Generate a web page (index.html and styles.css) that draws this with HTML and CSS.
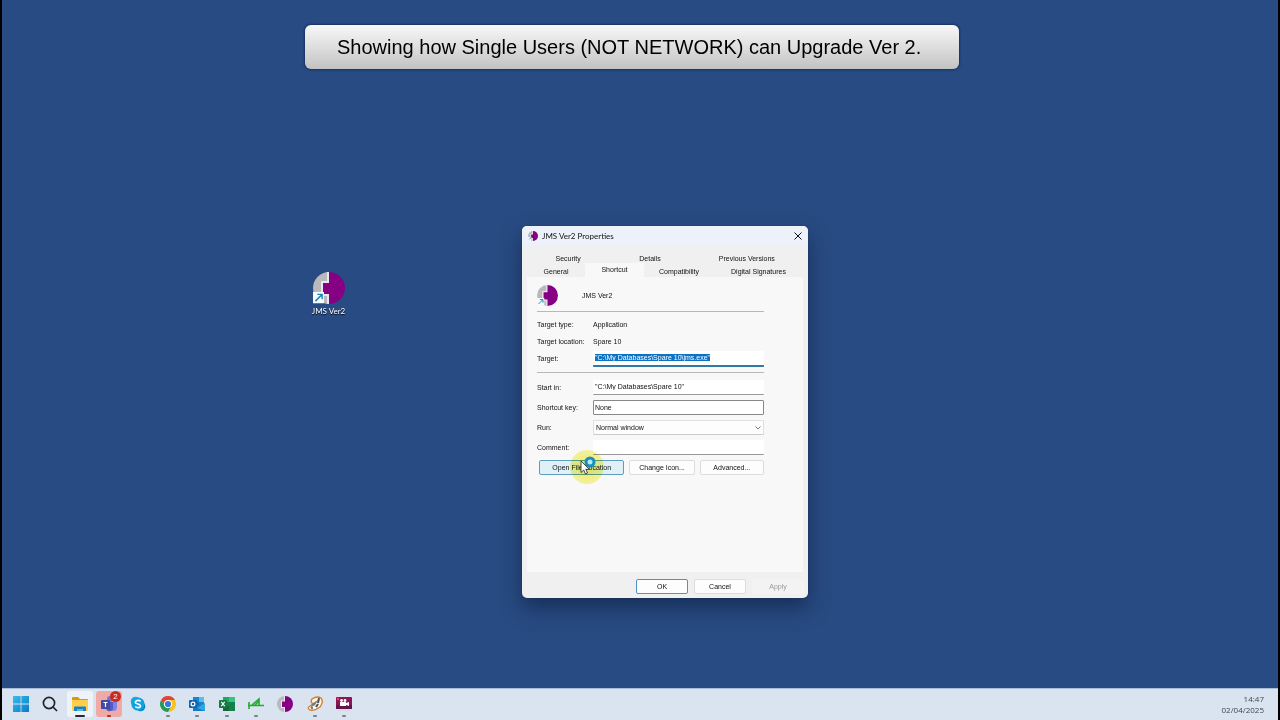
FILE: index.html
```html
<!DOCTYPE html>
<html lang="en">
<head>
<meta charset="utf-8">
<title>Desktop</title>
<link rel="stylesheet" href="styles.css">
</head>
<body>
<svg class="defs" width="0" height="0" aria-hidden="true">
  <clipPath id="disc"><circle cx="16" cy="16" r="16"/></clipPath>
  <symbol id="jms" viewBox="0 0 32 32">
    <g clip-path="url(#disc)">
      <path fill="#b9b9bd" d="M0 0H16V32H0Z"/>
      <path fill="#ece6f0" d="M8 9H14V0H17V32H14V24H8Z"/>
      <path fill="#850083" d="M16 0H32V32H16V22H10V11H16Z"/>
    </g>
  </symbol>
  <symbol id="link" viewBox="0 0 12 12">
    <path fill="#f8fbfd" d="M0 0H12V12H0Z"/>
    <path d="M2.500 9.500L9 3M4.500 2.500H9.500V7.500" fill="none" stroke="#1689b8" stroke-width="1.500"/>
  </symbol>
</svg>
<main class="desktop">
  <h1 class="banner">Showing how Single Users (NOT NETWORK) can Upgrade Ver 2.</h1>

  <a class="shortcut" href="#props">
    <span class="app-icon"><svg class="logo"><use href="#jms"/></svg><svg class="badge"><use href="#link"/></svg></span>
    <span>JMS Ver2</span>
  </a>

  <section class="window" id="props" role="dialog" aria-labelledby="caption">
    <header class="titlebar">
      <span class="app-icon tiny"><svg class="logo"><use href="#jms"/></svg><svg class="badge"><use href="#link"/></svg></span>
      <h2 id="caption">JMS Ver2 Properties</h2>
      <button class="close" aria-label="Close"><svg viewBox="0 0 8 8"><path d="M.5.5l7 7M7.500.5l-7 7" stroke="#111" fill="none"/></svg></button>
    </header>
    <nav class="tabs" role="tablist">
      <div class="tab-row back">
        <button role="tab">Security</button><button role="tab">Details</button><button role="tab">Previous Versions</button>
      </div>
      <div class="tab-row front">
        <button role="tab">General</button><button role="tab" class="active" aria-selected="true">Shortcut</button><button role="tab">Compatibility</button><button role="tab">Digital Signatures</button>
      </div>
    </nav>
    <form class="panel">
      <div class="heading">
        <span class="app-icon small"><svg class="logo"><use href="#jms"/></svg><svg class="badge"><use href="#link"/></svg></span>
        <span>JMS Ver2</span>
      </div>
      <div class="group info">
        <div class="row"><span>Target type:</span><span>Application</span></div>
        <div class="row"><span>Target location:</span><span>Spare 10</span></div>
        <div class="row"><label for="target">Target:</label><input id="target" class="focused" type="text" value="&quot;C:\My Databases\Spare 10\jms.exe&quot;" spellcheck="false"></div>
      </div>
      <div class="group fields">
        <div class="row"><label for="start">Start in:</label><input id="start" type="text" value="&quot;C:\My Databases\Spare 10&quot;" spellcheck="false"></div>
        <div class="row"><label for="key">Shortcut key:</label><input id="key" class="boxed" type="text" value="None"></div>
        <div class="row"><label for="run">Run:</label><select id="run"><option>Normal window</option><option>Minimized</option><option>Maximized</option></select></div>
        <div class="row"><label for="comment">Comment:</label><input id="comment" type="text"></div>
        <div class="actions">
          <button type="button" class="hot">Open File Location</button>
          <button type="button">Change Icon...</button>
          <button type="button">Advanced...</button>
        </div>
      </div>
    </form>
    <footer class="buttons">
      <button class="default">OK</button>
      <button>Cancel</button>
      <button disabled>Apply</button>
    </footer>
    <span class="halo"></span>
    <svg class="pointer" viewBox="0 0 18 20">
      <circle cx="10" cy="6" r="4" fill="#b9e6f0" stroke="#168fbb" stroke-width="3"/>
      <path d="M1 5V16.500L3.700 14L5.500 18L7.500 17L5.800 13.300H9.300Z" fill="#fff" stroke="#222" stroke-width=".8"/>
    </svg>
  </section>
</main>

<footer class="taskbar">
  <nav class="apps">
    <button aria-label="Start"><svg viewBox="0 0 16 16"><defs><linearGradient id="w" x2="1" y2="1"><stop stop-color="#39bce9"/><stop offset="1" stop-color="#087bc8"/></linearGradient></defs><path fill="url(#w)" d="M0 0H7.600V7.600H0ZM8.400 0H16V7.600H8.400ZM0 8.400H7.600V16H0ZM8.400 8.400H16V16H8.400Z"/></svg></button>
    <button aria-label="Search"><svg viewBox="0 0 16 16"><g fill="none" stroke="#20242a" stroke-width="1.700"><circle cx="7" cy="7" r="5.600"/><path d="M11 11l4 4"/></g></svg></button>
    <button aria-label="File Explorer" class="running current"><svg viewBox="0 0 16 16"><path fill="#dc9615" d="M0 2Q0 1 1 1H6L8 3H15Q16 3 16 4V8H0Z"/><path fill="#ffcf49" d="M0 4H16V14Q16 15 15 15H1Q0 15 0 14Z"/><path fill="#1484c9" d="M2 11.500Q2 10.500 3 10.500H13Q14 10.500 14 11.500V15H2Z"/><path fill="#58b9e2" d="M5 13H11V15H5Z"/></svg></button>
    <button aria-label="Teams, 2 notifications" class="running alert"><svg viewBox="0 0 16 16"><circle cx="9" cy="3" r="3" fill="#7076d8"/><path fill="#7b83eb" d="M5 6H16V11Q16 15 12 15H9Q5 15 5 11Z"/><path fill="#5558bd" d="M5 6H12V13Q10 16 7 15Q5 14 5 11Z"/><rect y="4" width="9" height="9" rx="1" fill="#4149a9"/><path d="M2.500 6.500H6.500M4.500 6.500V11" stroke="#fff" stroke-width="1.200"/></svg><span class="count">2</span></button>
    <button aria-label="Skype"><svg viewBox="0 0 16 16"><circle cx="5.500" cy="5.500" r="4.800" fill="#1aaee8"/><circle cx="10.500" cy="10.500" r="4.800" fill="#087fc7"/><circle cx="8" cy="8" r="6.600" fill="#10a2df"/><path d="M10.700 5.400Q9 3.900 7 4.500Q4.500 5.500 5.800 7.200L9.700 8.700Q11.500 10.500 9.200 11.500Q7 12.100 5.200 10.500" fill="none" stroke="#fff" stroke-width="1.600"/></svg></button>
    <button aria-label="Chrome" class="running"><svg viewBox="0 0 16 16"><path fill="#e34334" d="M1.070 4A8 8 0 0 1 14.930 4H8L4.540 10Z"/><path fill="#f9c31d" d="M14.930 4A8 8 0 0 1 8 16L11.460 10L8 4Z"/><path fill="#249b54" d="M8 16A8 8 0 0 1 1.070 4L4.540 10H11.460Z"/><circle cx="8" cy="8" r="4" fill="#fff"/><circle cx="8" cy="8" r="3.100" fill="#3878d8"/></svg></button>
    <button aria-label="Outlook" class="running"><svg viewBox="0 0 16 16"><path fill="#1686d1" d="M4 1H15V9H4Z"/><path fill="#50c2ee" d="M10 1H15V6H10Z"/><path fill="#1768af" d="M4 6H10V11H4Z"/><path fill="#147ac3" d="M4 9H16V15H4Z"/><path fill="#33a6e2" d="M16 7V15L8 12Z"/><rect y="4" width="8" height="8" rx="1" fill="#1064b0"/><circle cx="4" cy="8" r="1.900" fill="none" stroke="#fff" stroke-width="1.200"/></svg></button>
    <button aria-label="Excel" class="running"><svg viewBox="0 0 16 16"><path fill="#23a566" d="M4 1H10V8H4Z"/><path fill="#35c481" d="M10 1H16V6H10Z"/><path fill="#15804a" d="M4 6H16V15H4Z"/><path fill="#17643e" d="M4 10H10V15H4Z"/><rect y="4" width="8" height="8" rx="1" fill="#107c41"/><path d="M2.300 5.900L5.700 10.200M5.700 5.900L2.300 10.200" stroke="#fff" stroke-width="1.200"/></svg></button>
    <button aria-label="Survey tool" class="running"><svg viewBox="0 0 16 16"><path d="M1 6V13M0 9.500H16M4 9L11 3V9M7 9L11 5" fill="none" stroke="#20ad2b" stroke-width="1.600"/></svg></button>
    <button aria-label="JMS"><svg><use href="#jms"/></svg></button>
    <button aria-label="Paint" class="running"><svg viewBox="0 0 16 16"><path fill="#fff5e6" stroke="#d18132" stroke-width="1.400" d="M5 3Q10-.5 14 2Q17 6 13 11Q8 15 3 14Q-.5 12 3 10L6 8Q3 6 5 3Z"/><path d="M11 4L8 9L3 12L6 7Z" fill="#777b80"/><path d="M12 2L11 7M9 11L11 8" stroke="#504e50" stroke-width="2"/><circle cx="5" cy="12" r="1" fill="#55585b"/></svg></button>
    <button aria-label="Screen recorder" class="running"><svg viewBox="0 0 16 16"><path fill="#d9d9df" d="M3 12H13L15 15H1Z"/><rect y="1" width="16" height="12" rx="1" fill="#8d1457"/><path fill="#5f164c" d="M0 9H16V13H0Z"/><path fill="#fff" d="M4 6H10V10H4ZM10 7L13 6V10L10 9Z"/><circle cx="5.500" cy="4.500" r="1.400" fill="#fff"/><circle cx="9" cy="4.500" r="1.400" fill="#fff"/><circle cx="2" cy="3" r="1.200" fill="#f1483d"/></svg></button>
  </nav>
  <div class="clock"><time>14:47</time><time>02/04/2025</time></div>
</footer>
<script src="script.js"></script>
</body>
</html>
```
FILE: styles.css
```css
* { box-sizing: border-box; }
html { background: #000; }
body {
  display: flex;
  flex-direction: column;
  min-height: 100vh;
  margin: 0 2px;
  font: 7px/10px "Liberation Sans", Arial, sans-serif;
  color: #111;
}
button, input, select { margin: 0; font: inherit; color: inherit; }
.defs { position: absolute; }
.desktop {
  position: relative;
  display: flow-root;
  flex: 1;
  background: #284b83;
}
.banner {
  width: max-content;
  margin: 25px auto 0 303px;
  padding: 10px 38px 10px 32px;
  border-radius: 6px;
  background: linear-gradient(#f8f8f8, #dedede 50%, #c2c2c2);
  box-shadow: 0 0 2px 1px #183361;
  font-size: 20px;
  line-height: 24px;
  font-weight: 400;
  color: #000;
}

.app-icon { position: relative; display: block; width: 32px; height: 32px; }
.app-icon .logo { display: block; width: 100%; height: 100%; }
.app-icon .badge { position: absolute; left: 0; bottom: 0; width: 36%; height: 36%; }
.app-icon.small { width: 21px; height: 21px; }
.app-icon.tiny { width: 10px; height: 10px; }

.shortcut {
  position: absolute;
  left: 304px;
  top: 272px;
  display: flex;
  flex-direction: column;
  align-items: center;
  gap: 1px;
  width: 45px;
  color: #fff;
  font: 8px/12px Lato, sans-serif;
  text-decoration: none;
  text-shadow: 0 1px 1px #000;
}

.window {
  position: absolute;
  left: 520px;
  top: 226px;
  width: 286px;
  border-radius: 5px;
  background: #f0f0f0;
  box-shadow: 0 0 1px #14284b, 0 10px 20px rgba(8, 20, 45, .5);
}
.titlebar {
  display: flex;
  align-items: center;
  gap: 4px;
  height: 20px;
  padding: 0 6px;
  border-radius: 5px 5px 0 0;
  background: #edf2fa;
}
.titlebar h2 { flex: 1; margin: 0; font: 8px/10px Lato, sans-serif; color: #111; }
.close { display: flex; padding: 0; border: 0; background: none; }
.close svg { width: 8px; height: 8px; }

.tabs { padding: 6px 5px 0; }
.tab-row { display: grid; }
.tab-row button { padding: 1px 0 0; border: 0; background: none; }
.back { grid-template-columns: 82fr 81fr 112fr; height: 13px; }
.front { grid-template-columns: 58fr 59fr 70fr 89fr; height: 12px; }
.front .active { margin-top: -2px; padding-bottom: 2px; background: #f8f8f8; }

.panel {
  min-height: 295px;
  margin: 0 5px;
  padding: 0 39px 0 10px;
  background: #f8f8f8;
}
.heading {
  display: flex;
  align-items: center;
  gap: 24px;
  height: 35px;
  padding-top: 3px;
  border-bottom: 1px solid #b8b8b8;
}
.group { display: grid; }
.info { gap: 1px; padding: 5px 0 5px; border-bottom: 1px solid #b8b8b8; }
.fields { gap: 5px; padding-top: 7px; }
.row { display: grid; grid-template-columns: 56px 1fr; align-items: center; min-height: 15px; }
.info .row { min-height: 16px; }
.row input, .row select {
  width: 100%;
  height: 15px;
  padding: 0 2px 1px;
  border: 0;
  border-bottom: 1px solid #999;
  border-radius: 1px;
  outline: 0;
  background: #fff;
}
.row .focused { height: 16px; border-bottom: 2px solid #3179a4; }
.row .focused::selection { background: #0b72c4; color: #fff; }
.row .boxed { border: 1px solid #888; padding: 0 1px 1px; }
.row select {
  appearance: none;
  padding: 0 2px;
  border: 1px solid #e0e0e0;
  border-bottom-color: #ccc;
  background: url("data:image/svg+xml,%3Csvg xmlns='http://www.w3.org/2000/svg' width='6' height='4'%3E%3Cpath d='M.5.5L3 3L5.500.5' fill='none' stroke='%23777'/%3E%3C/svg%3E") no-repeat right 2px center #fdfdfd;
}
.actions { display: grid; grid-template-columns: 85fr 65fr 64fr; gap: 5px; padding-left: 2px; }
.actions button, .buttons button {
  height: 15px;
  padding: 0;
  border: 1px solid #dcdcdc;
  border-radius: 2px;
  background: #fdfdfd;
  white-space: nowrap;
}
.actions .hot { border-color: #5f9dbd; background: #dff0f9; }

.buttons { display: grid; grid-template-columns: repeat(3, 52px); justify-content: end; gap: 6px; padding: 7px 4px 4px; }
.buttons .default { border-color: #4c94c2; }
.buttons button:disabled { border-color: #f3f3f3; background: #f3f3f3; color: #999; }

.halo {
  position: absolute;
  left: 48px;
  top: 224px;
  width: 34px;
  height: 34px;
  border-radius: 50%;
  background: radial-gradient(#f4ee6c, #faf7a0 70%);
  mix-blend-mode: multiply;
}
.pointer { position: absolute; left: 58px; top: 230px; width: 18px; height: 20px; }

.taskbar {
  display: flex;
  justify-content: space-between;
  align-items: center;
  height: 32px;
  padding: 0 14px 2px 6px;
  border-top: 1px solid #a9bdd8;
  background: #dae4f0;
}
.apps { display: flex; justify-content: space-between; width: 349px; }
.apps button {
  position: relative;
  display: grid;
  place-items: center;
  width: 26px;
  height: 26px;
  padding: 0;
  border: 0;
  border-radius: 3px;
  background: none;
}
.apps button > svg { width: 16px; height: 16px; }
.apps .running::after {
  content: "";
  position: absolute;
  bottom: 0;
  left: 11px;
  width: 4px;
  height: 2px;
  border-radius: 1px;
  background: #7b8188;
}
.apps .current { background: #edf3f8; }
.apps .current::after { left: 8px; width: 10px; background: #222b35; }
.apps .alert { background: #f0aaa5; }
.apps .alert::after { background: #c42420; }
.count {
  position: absolute;
  top: 0;
  right: 1px;
  width: 11px;
  height: 11px;
  border-radius: 50%;
  background: #c92b20;
  font-size: 8px;
  line-height: 11px;
  color: #fff;
}
.clock { display: flex; flex-direction: column; text-align: right; font: 8px/11px "Open Sans", sans-serif; color: #3e454d; }
```
FILE: script.js
```js
const target = document.getElementById("target");
target.focus();
target.select();
```
